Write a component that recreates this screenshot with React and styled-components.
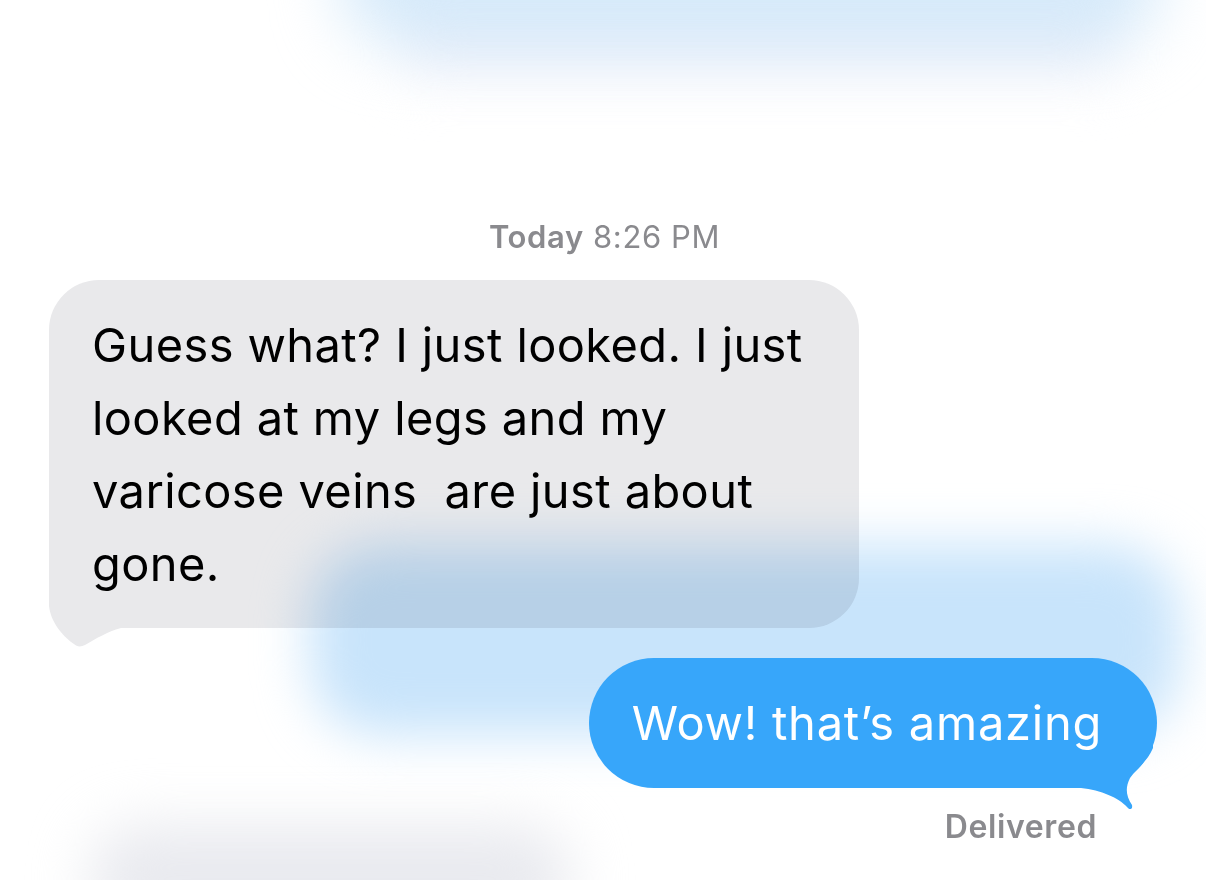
import styled, { createGlobalStyle } from "styled-components";

const GlobalStyle = createGlobalStyle`
    html, body {
        margin: 0;
        padding: 0;
        background: #ffffff;
    }
    body {
        font-family: "Inter", "Liberation Sans", sans-serif;
        -webkit-font-smoothing: antialiased;
    }
`;

const Screen = styled.div`
    position: relative;
    width: 1206px;
    height: 880px;
    overflow: hidden;
    background: #ffffff;
`;

// out-of-focus bubbles of the conversation, lying over / under the sharp ones
const Blur = styled.div`
    position: absolute;
    left: ${(p) => p.x}px;
    top: ${(p) => p.y}px;
    width: ${(p) => p.w}px;
    height: ${(p) => p.h}px;
    border-radius: ${(p) => p.r}px;
    background: ${(p) => p.color};
    filter: blur(${(p) => p.blur}px);
    mix-blend-mode: multiply;
    z-index: ${(p) => p.z || 0};
`;

const Thread = styled.div`
    position: relative;
    display: flex;
    flex-direction: column;
    padding: 218px 49px 0 49px;
`;

const Stamp = styled.div`
    align-self: center;
    font-size: 31px;
    line-height: 38px;
    letter-spacing: 0.6px;
    color: #8a8a8e;
    margin-left: 3px;

    b {
        font-weight: 600;
    }
`;

const Bubble = styled.div`
    position: relative;
    width: fit-content;
    padding: ${(p) => (p.sent ? "28px 55px 29px 43px" : "28px 56px 28px 43px")};
    border-radius: ${(p) => (p.sent ? "65px" : "50px")};
    background: ${(p) => (p.sent ? "#37a6fa" : "#e9e9eb")};
    color: ${(p) => (p.sent ? "#ffffff" : "#000000")};
    font-size: 47px;
    line-height: 73px;
    letter-spacing: ${(p) => (p.sent ? "0.75px" : "0.4px")};
    white-space: pre-wrap;
    align-self: ${(p) => (p.sent ? "flex-end" : "flex-start")};
    margin-top: ${(p) => p.top}px;
    z-index: ${(p) => (p.sent ? 3 : 1)};
`;

const Tail = styled.svg`
    position: absolute;
    ${(p) => (p.sent ? "right: 0;" : "left: 0;")}
    bottom: -22px;
    width: 80px;
    height: 72px;
    overflow: visible;
    z-index: -1;
`;

const Status = styled.div`
    align-self: flex-end;
    margin: 20px 60px 0 0;
    font-size: 32px;
    line-height: 38px;
    letter-spacing: 0.6px;
    font-weight: 600;
    color: #8a8a8e;
    z-index: 3;
`;

const App = () => {
    return (
        <>
            <GlobalStyle />
            <Screen>
                <Blur x={340} y={-95} w={820} h={140} r={60} blur={32} color="#d6eafa" />
                <Blur x={400} y={30} w={720} h={50} r={25} blur={26} color="#f3f5fb" />
                <Blur x={310} y={545} w={870} h={190} r={70} blur={26} color="#c8e4fb" z={2} />
                <Blur x={90} y={825} w={480} h={110} r={50} blur={28} color="#e9eaef" />
                <Thread>
                    <Stamp>
                        <b>Today</b> 8:26 PM
                    </Stamp>
                    <Bubble top={24}>
                        {"Guess what? I just looked. I just\nlooked at my legs and my\nvaricose veins  are just about\ngone."}
                        <Tail viewBox="0 0 80 72">
                            <path
                                d="M0 0 L0 28 C2 46 16 60 25 66 C28 69 32 69 36 67 C48 60 58 54 72 50 L72 0 Z"
                                fill="#e9e9eb"
                            />
                        </Tail>
                    </Bubble>
                    <Bubble sent top={30}>
                        {"Wow! that\u2019s amazing"}
                        <Tail sent viewBox="0 0 80 72">
                            <path
                                d="M4 50 C24 52 42 60 50 69 C52 72 56 72 55 67 C49 58 48 50 53 40 C60 30 70 24 76 10 L76 0 L4 0 Z"
                                fill="#37a6fa"
                            />
                        </Tail>
                    </Bubble>
                    <Status>Delivered</Status>
                </Thread>
            </Screen>
        </>
    );
};

export default App;
